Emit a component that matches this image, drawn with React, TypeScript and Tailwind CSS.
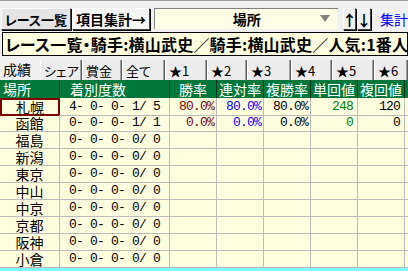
import React from 'react';

const jp = "font-['Noto_Sans_CJK_JP',sans-serif]";
const mono = "font-['Liberation_Mono',monospace] text-[13px] tracking-[-0.8px]";

const places = ['札幌', '函館', '福島', '新潟', '東京', '中山', '中京', '京都', '阪神', '小倉'];

type Row = {
  counts: string;
  win?: string;
  rentai?: string;
  fukusho?: string;
  tan?: string;
  fuku?: string;
};

const rows: Row[] = [
  { counts: '4- 0- 0- 1/ 5', win: '80.0%', rentai: '80.0%', fukusho: '80.0%', tan: '248', fuku: '120' },
  { counts: '0- 0- 0- 1/ 1', win: '0.0%', rentai: '0.0%', fukusho: '0.0%', tan: '0', fuku: '0' },
  ...Array.from({ length: 8 }, () => ({ counts: '0- 0- 0- 0/ 0' })),
];

const tabs = [
  { label: '成績', w: 'w-[40px]', active: true },
  { label: 'シェア', w: 'w-[42px]' },
  { label: '賞金', w: 'w-[40px]' },
  { label: '全て', w: 'w-[43px]' },
  { label: '★1', w: 'w-[42px]' },
  { label: '★2', w: 'w-[40px]' },
  { label: '★3', w: 'w-[44px]' },
  { label: '★4', w: 'w-[41px]' },
  { label: '★5', w: 'w-[42px]' },
  { label: '★6', w: 'w-[34px]' },
];

const cols = 'grid grid-cols-[60px_110px_47px_47px_47px_47px_47px_3px]';

function RaisedButton({ children, className = '' }: { children: React.ReactNode; className?: string }) {
  return (
    <div
      className={`flex items-center justify-center h-[22px] border border-t-white border-l-white border-r-[#404040] border-b-[#404040] shadow-[1px_1px_0_#000] ${className}`}
    >
      {children}
    </div>
  );
}

export default function App() {
  return (
    <div className={`w-[408px] h-[271px] overflow-hidden bg-[#f0f0f0] ${jp}`}>
      {/* top toolbar */}
      <div className="h-[32px] border-t border-[#a0a0a0] pt-[7px] pl-[1px] flex items-start gap-[1px]">
        <RaisedButton className="w-[71px] bg-[#e4e4e4] text-[13px] font-bold leading-none [font-feature-settings:'palt']">
          レース一覧
        </RaisedButton>
        <RaisedButton className="w-[80px] bg-[#f6f6f6] text-[14px] font-bold leading-none">項目集計→</RaisedButton>
        <div className="ml-[3px] w-[187px] h-[21px] bg-[#ffffe8] border-t border-l border-[#808080] relative flex items-center justify-center">
          <span className="text-[14px] font-bold leading-none">場所</span>
          <svg className="absolute right-[8px] top-[6px]" width="10" height="8" viewBox="0 0 10 8">
            <polygon points="0,0 10,0 5,7" fill="#808080" />
          </svg>
        </div>
        <RaisedButton className="ml-[4px] w-[13px] bg-[#f0f0f0] text-[15px] font-bold leading-none">↑</RaisedButton>
        <RaisedButton className="w-[14px] bg-[#f0f0f0] text-[15px] font-bold leading-none">↓</RaisedButton>
        <span className="ml-[8px] mt-[4px] text-[14px] leading-none text-[#0000ff] whitespace-nowrap">集計</span>
      </div>

      {/* title */}
      <div className="h-[24px] ml-[2px] bg-[#ffffe0] border border-black flex items-center pl-[2px] whitespace-nowrap overflow-hidden">
        <span className="text-[16px] font-bold leading-none tracking-[0.2px]">
          <span className="[font-feature-settings:'palt']">レース一覧・</span>騎手:横山武史／騎手:横山武史／人気:1番人
        </span>
      </div>

      {/* tabs */}
      <div className="h-[24px] flex items-end [font-feature-settings:'palt']">
        {tabs.map((t) =>
          t.active ? (
            <div key={t.label} className={`${t.w} h-[22px] flex items-center pl-[3px] text-[14px] leading-none`}>
              {t.label}
            </div>
          ) : (
            <div
              key={t.label}
              className={`${t.w} h-[20px] flex items-center pl-[3px] text-[13px] leading-none bg-[#ececec] border-l border-l-white border-r border-r-[#606060] shadow-[inset_-1px_0_0_#a0a0a0] whitespace-nowrap overflow-hidden`}
            >
              {t.label}
            </div>
          ),
        )}
      </div>

      {/* header */}
      <div className={`${cols} h-[18px] bg-[#00783c] text-white text-[14px] leading-none`}>
        <div className="border-r border-[#0a3018] flex items-center pl-[3px]">場所</div>
        <div className="border-r border-[#0a3018] flex items-center pl-[10px]">着別度数</div>
        <div className="border-r border-[#0a3018] flex items-center justify-center">勝率</div>
        <div className="border-r border-[#0a3018] flex items-center justify-center">連対率</div>
        <div className="border-r border-[#0a3018] flex items-center justify-center">複勝率</div>
        <div className="border-r border-[#0a3018] flex items-center justify-center">単回値</div>
        <div className="border-r border-[#0a3018] flex items-center justify-center">複回値</div>
        <div />
      </div>

      {/* body */}
      {rows.map((r, i) => (
        <div key={places[i]} className={`${cols} h-[17px] bg-[#ffffe0] leading-[14px]`}>
          <div
            className={`flex items-center justify-center text-[14px] ${
              i === 0 ? 'border-2 border-[#800000]' : 'border-r border-b border-[#bcbcbc]'
            }`}
          >
            {places[i]}
          </div>
          <div className={`border-r border-b border-[#bcbcbc] flex items-center justify-center whitespace-pre ${mono}`}>
            {r.counts}
          </div>
          <div className={`border-r border-b border-[#bcbcbc] flex items-center justify-end pr-[2px] text-[#800000] ${mono}`}>
            {r.win}
          </div>
          <div className={`border-r border-b border-[#bcbcbc] flex items-center justify-end pr-[2px] text-[#0000ff] ${mono}`}>
            {r.rentai}
          </div>
          <div className={`border-r border-b border-[#bcbcbc] flex items-center justify-end pr-[2px] text-black ${mono}`}>
            {r.fukusho}
          </div>
          <div className={`border-r border-b border-[#bcbcbc] flex items-center justify-end pr-[4px] text-[#008000] ${mono}`}>
            {r.tan}
          </div>
          <div className={`border-r border-b border-[#bcbcbc] flex items-center justify-end pr-[4px] text-black ${mono}`}>
            {r.fuku}
          </div>
          <div className="border-b border-[#bcbcbc]" />
        </div>
      ))}
      <div className="h-[3px] bg-[#80ffff]" />
    </div>
  );
}
